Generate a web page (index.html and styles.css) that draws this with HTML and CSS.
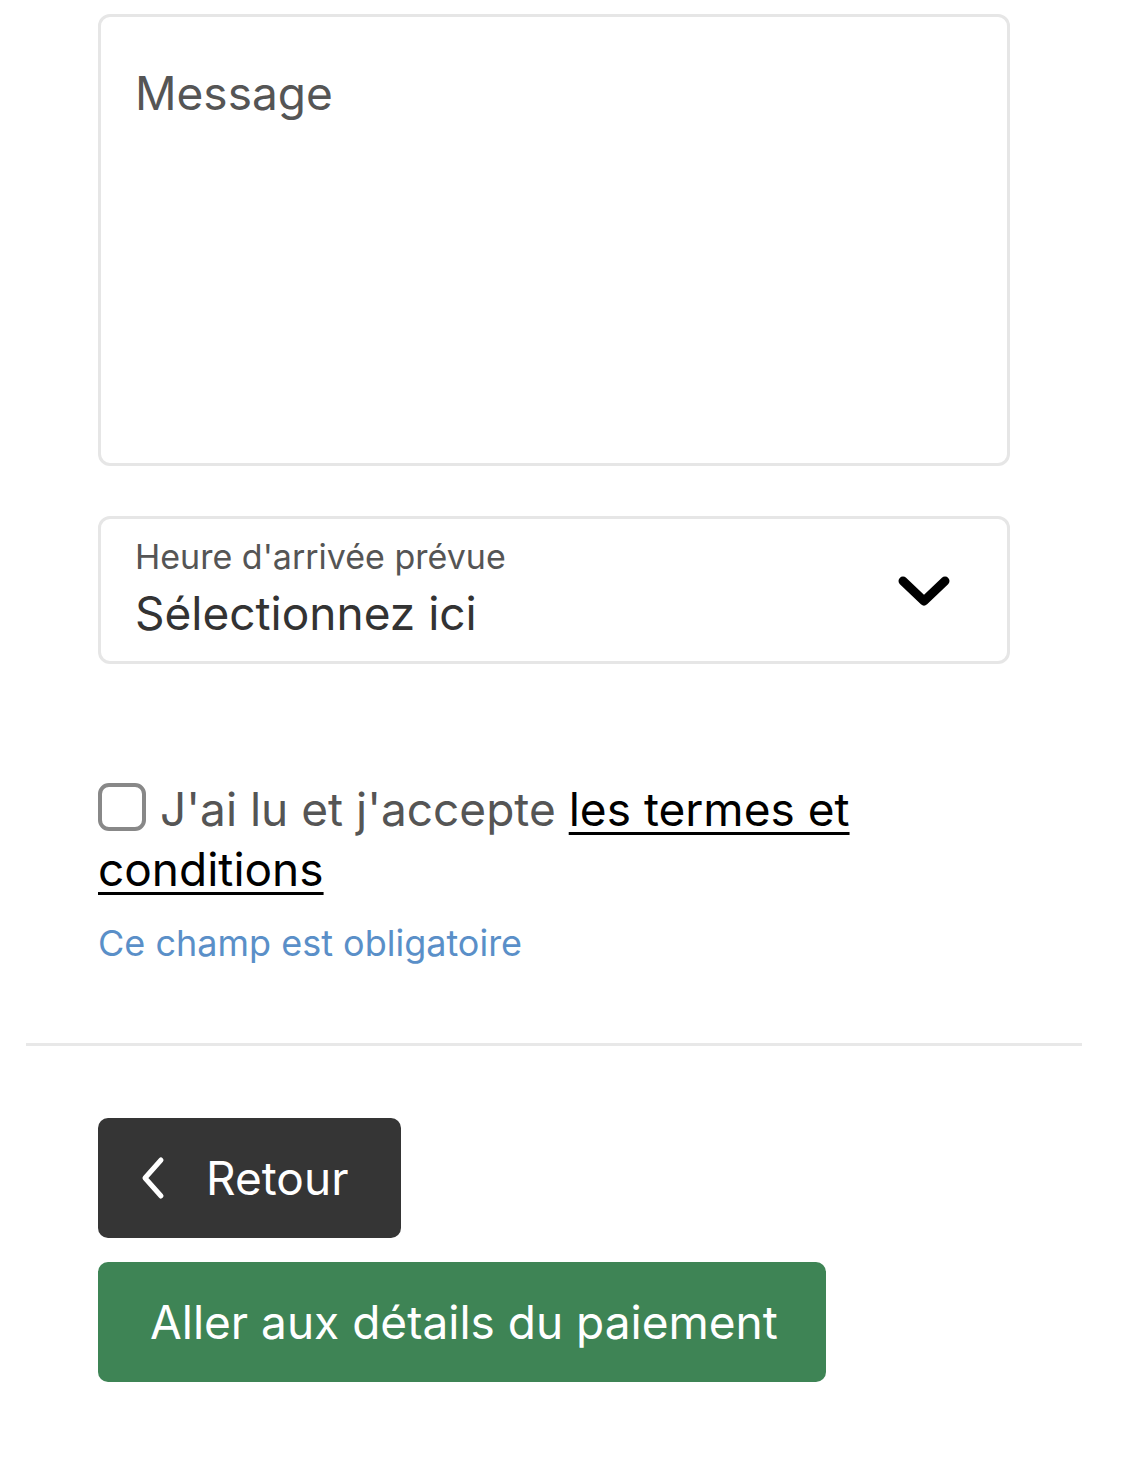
FILE: index.html
```html
<!DOCTYPE html>
<html lang="fr">
<head>
<meta charset="utf-8">
<title>Formulaire</title>
<link rel="stylesheet" href="styles.css">
</head>
<body>
<div class="form">
  <textarea class="message" placeholder="Message"></textarea>

  <div class="select">
    <div class="select-text">
      <div class="select-label">Heure d'arrivée prévue</div>
      <div class="select-value">Sélectionnez ici</div>
    </div>
    <svg class="chevron-down" width="52" height="32" viewBox="0 0 52 32" aria-hidden="true">
      <path d="M5 6 L26 26 L47 6" fill="none" stroke="#000" stroke-width="9" stroke-linecap="round" stroke-linejoin="round"/>
    </svg>
  </div>

  <p class="terms"><span class="checkbox"></span>J'ai lu et j'accepte <a href="#" class="terms-link">les termes et conditions</a></p>
  <p class="error">Ce champ est obligatoire</p>
</div>

<hr class="divider">

<div class="actions">
  <button class="btn btn-back" type="button">
    <svg class="chevron-left" width="26" height="44" viewBox="0 0 26 44" aria-hidden="true">
      <path d="M21 4 L5 22 L21 40" fill="none" stroke="#fff" stroke-width="5" stroke-linecap="round" stroke-linejoin="round"/>
    </svg>
    <span>Retour</span>
  </button>
  <button class="btn btn-next" type="button">Aller aux détails du paiement</button>
</div>
</body>
</html>
```
FILE: styles.css
```css
html, body {
  margin: 0;
  padding: 0;
  background: #fff;
}

body {
  font-family: Inter, "Noto Sans", "Liberation Sans", sans-serif;
  color: #555;
}

.form {
  width: 912px;
  margin-left: 98px;
  padding-top: 14px;
}

.message {
  display: block;
  box-sizing: border-box;
  width: 912px;
  height: 452px;
  margin: 0;
  padding: 48px 34px;
  border: 3px solid #e6e6e6;
  border-radius: 12px;
  font-family: inherit;
  font-size: 46px;
  line-height: 56px;
  color: #333;
  resize: none;
  outline: none;
  background: #fff;
}

.message::placeholder {
  color: #555;
  opacity: 1;
}

.select {
  box-sizing: border-box;
  height: 148px;
  margin-top: 50px;
  border: 3px solid #e6e6e6;
  border-radius: 12px;
  display: flex;
  align-items: center;
  justify-content: space-between;
  padding: 0 57px 0 34px;
}

.select-text {
  display: flex;
  flex-direction: column;
  gap: 6px;
}

.select-label {
  font-size: 34px;
  line-height: 40px;
  color: #555;
}

.select-value {
  font-size: 46px;
  line-height: 60px;
  color: #333;
}

.chevron-down {
  display: block;
  margin-top: 2px;
}

.terms {
  margin: 115px 0 0;
  font-size: 46px;
  line-height: 60px;
  color: #555;
}

.checkbox {
  display: inline-block;
  box-sizing: border-box;
  width: 48px;
  height: 48px;
  border: 4px solid #888;
  border-radius: 11px;
  vertical-align: -5px;
  margin-right: 14px;
}

.terms-link {
  color: #000;
  text-decoration: underline;
  text-decoration-thickness: 3px;
  text-underline-offset: 6px;
}

.error {
  margin: 22px 0 0;
  font-size: 36px;
  line-height: 44px;
  color: #5a8fc8;
}

.divider {
  width: 1056px;
  margin: 78px 0 0 26px;
  border: 0;
  border-top: 3px solid #e8e8e8;
  height: 0;
}

.actions {
  margin: 72px 0 0 98px;
  display: flex;
  flex-direction: column;
  align-items: flex-start;
  gap: 24px;
}

.btn {
  height: 120px;
  border: 0;
  border-radius: 10px;
  font-family: inherit;
  font-size: 46px;
  color: #fff;
  cursor: pointer;
}

.btn-back {
  width: 303px;
  background: #353535;
  display: flex;
  align-items: center;
  padding: 0 0 0 42px;
  gap: 40px;
}

.btn-next {
  width: 728px;
  background: #3e8455;
  padding: 0 0 0 52px;
  text-align: left;
}
```
